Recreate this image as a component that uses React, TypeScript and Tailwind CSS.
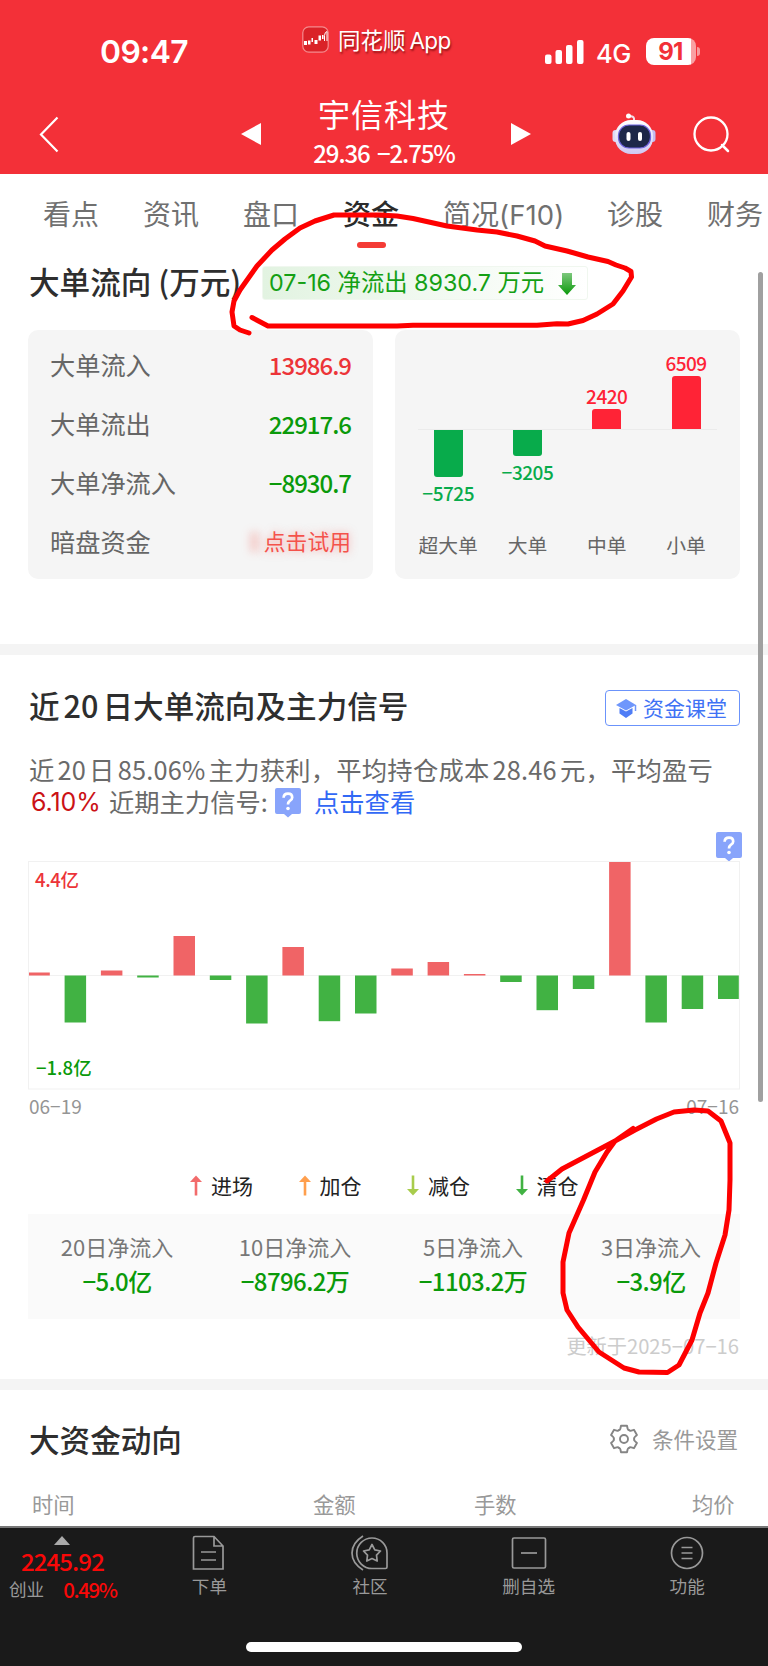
import React from "react";

const CJK = "font-['Noto_Sans_CJK_SC',sans-serif]";
const SF = "font-['Inter','Noto_Sans_CJK_SC',sans-serif]";

const TABS = [
  { label: "看点", cls: "w-[100px]" },
  { label: "资讯", cls: "w-[100px]" },
  { label: "盘口", cls: "w-[100px]" },
  { label: "资金", cls: "w-[100px]", active: true },
  { label: "简况(F10)", cls: "w-[164px]" },
  { label: "诊股", cls: "w-[100px]" },
  { label: "财务", cls: "w-[60px]" },
];

const FLOW = [
  { label: "大单流入", value: "13986.9", cls: "text-[#ec3438]" },
  { label: "大单流出", value: "22917.6", cls: "text-[#0a9a0a]" },
  { label: "大单净流入", value: "−8930.7", cls: "text-[#0a9a0a]" },
];

const ORDERS = [
  { label: "超大单", value: -5725, px: 47, line: "w-[70px] self-end" },
  { label: "大单", value: -3205, px: 26, line: "w-full" },
  { label: "中单", value: 2420, px: 20, line: "w-full" },
  { label: "小单", value: 6509, px: 53, line: "w-[71px] self-start" },
];

const DAYS = [3, -47, 5, -2, 39.5, -4.5, -48, 28.5, -45.7, -38, 7, 13.5, 1.5, -6.5, -34.7, -13.5, 113.5, -47, -33.5, -23.5];

const LEGEND = [
  { label: "进场", color: "#f26b6b", up: true },
  { label: "加仓", color: "#ff9f4d", up: true },
  { label: "减仓", color: "#a8cc4c", up: false },
  { label: "清仓", color: "#41b243", up: false },
];

const STATS = [
  ["20日净流入", "−5.0亿"],
  ["10日净流入", "−8796.2万"],
  ["5日净流入", "−1103.2万"],
  ["3日净流入", "−3.9亿"],
];

function Robot() {
  return (
    <svg width="46" height="44" viewBox="0 0 46 44">
      <defs>
        <linearGradient id="shell" x1="0" y1="0" x2="0" y2="1">
          <stop offset="0" stopColor="#ffffff" />
          <stop offset="1" stopColor="#cfc8f2" />
        </linearGradient>
      </defs>
      <path d="M23 9V6.500Q22.500 4 18 4" fill="none" stroke="#f3dfe9" strokeWidth="2" />
      <circle cx="17.500" cy="4" r="2.500" fill="#fff" />
      <rect x="1.500" y="18" width="6" height="12" rx="3" fill="#dedaf6" />
      <rect x="38.500" y="18" width="6" height="12" rx="3" fill="#c4bcf0" />
      <rect x="4" y="8" width="38" height="34" rx="16" fill="url(#shell)" />
      <rect x="7.500" y="13" width="32" height="23" rx="10.500" fill="#1d2748" stroke="#6d62dd" strokeWidth="1.200" />
      <rect x="15.500" y="20" width="4" height="9" rx="2" fill="#fff" />
      <rect x="27" y="20" width="4" height="9" rx="2" fill="#fff" />
    </svg>
  );
}

function Question() {
  return (
    <svg width="26" height="30" viewBox="0 0 26 30" className="shrink-0">
      <path d="M2 0H24Q26 0 26 2V24Q26 26 24 26H17L13 29.500L9 26H2Q0 26 0 24V2Q0 0 2 0Z" fill="#88a4fb" />
      <path d="M8.600 9.800Q8.800 5.700 13 5.700T17.200 9.500Q17.200 11.400 14.800 12.900Q13 14.200 13 16.500" fill="none" stroke="#fff" strokeWidth="2.700" />
      <circle cx="13" cy="20.500" r="1.800" fill="#fff" />
    </svg>
  );
}

function Gear() {
  return (
    <svg width="30" height="30" viewBox="-15 -15 30 30" className="mr-[13px]" fill="none" stroke="#858585" strokeWidth="1.900" strokeLinejoin="round" strokeLinecap="round">
      {[0, 60, 120, 180, 240, 300].map((a) => (
        <path key={a} transform={`rotate(${a})`} d="M-5.100 -8.830Q-3.900 -9 -3.600 -10.500L-3 -13.200H3L3.600 -10.500Q3.900 -9 5.100 -8.830" />
      ))}
      <circle cx="0" cy="0" r="4" />
    </svg>
  );
}

function StatusBar() {
  return (
    <div className="flex h-[88px] items-start text-white">
      <div className={`${SF} w-[302px] pt-[32px] pl-[100px] text-[31.8px] leading-[40px] font-semibold tracking-[-0.6px]`}>09:47</div>
      <svg width="27" height="27" viewBox="0 0 27 27" className="mt-[26px]">
        <rect x="0.800" y="0.800" width="25.400" height="25.400" rx="6" fill="#da2228" stroke="#f58b8e" strokeWidth="1.200" />
        <path d="M2 15h3v4H2zM6 14.500h2.500v4H6zM9.500 12h1.500v4H9.500zM12.500 14h3v4h-3zM16.500 9.500h2.500v5h-2.500zM20 9h1.500v4H20z" fill="#fff" />
        <path d="M22.500 15V9.500Q22.800 6 25 5.500V15" fill="none" stroke="#fff" strokeWidth="1" />
      </svg>
      <div className={`${SF} ml-[9px] w-[207px] pt-[25px] text-[22.5px] leading-[32px] whitespace-nowrap [text-shadow:1px_2px_2px_rgba(90,0,0,0.6)]`}>
        同花顺<span className="ml-[4px] tracking-[-0.7px]">App</span>
      </div>
      <svg width="39" height="25" viewBox="0 0 39 25" className="mt-[40px]" fill="#fff">
        <rect x="0" y="14.500" width="6.500" height="9.500" rx="2" />
        <rect x="10.500" y="10" width="6.500" height="14" rx="2" />
        <rect x="21" y="5" width="6.500" height="19" rx="2" />
        <rect x="32" y="0" width="6.500" height="24" rx="2" />
      </svg>
      <div className={`${SF} ml-[12px] w-[49.5px] pt-[38px] text-[25.5px] leading-[31px] font-medium tracking-[-0.5px]`}>4G</div>
      <div className="mt-[38px] flex h-[27px] w-[50px] items-center justify-center rounded-[8px] bg-gradient-to-r from-white from-90% to-[#f9a0a3] to-90%">
        <span className={`${SF} text-[24px] leading-[27px] font-bold tracking-[-0.8px] text-[#f23037]`}>91</span>
      </div>
      <div className="mt-[47px] ml-[1.5px] h-[9px] w-[3px] rounded-r-full bg-[#f79a9d]" />
    </div>
  );
}

function TitleBar() {
  return (
    <div className="flex h-[86px] items-start text-white">
      <svg width="20" height="37" viewBox="0 0 20 37" className="mt-[28px] ml-[39px]">
        <path d="M18.500 1.500L2 18.500L18.500 35.500" fill="none" stroke="#fff" strokeWidth="2.200" />
      </svg>
      <svg width="20" height="22" viewBox="0 0 20 22" className="mt-[35px] ml-[182px]">
        <path d="M20 0V22L0 11Z" fill="#fff" />
      </svg>
      <div className={`${CJK} flex w-[250px] flex-col items-center pr-[4px]`}>
        <div className="mt-[5px] text-[32px] leading-[40px] tracking-[1px]">宇信科技</div>
        <div className="mt-[6px] text-[24px] leading-[28px] font-medium tracking-[-1.1px] [word-spacing:3px] whitespace-nowrap">29.36 −2.75%</div>
      </div>
      <svg width="20" height="22" viewBox="0 0 20 22" className="mt-[35px]">
        <path d="M0 0V22L20 11Z" fill="#fff" />
      </svg>
      <div className="mt-[24px] ml-[80px]">
        <Robot />
      </div>
      <svg width="38" height="38" viewBox="0 0 38 38" className="mt-[28px] ml-[35.5px]">
        <circle cx="18" cy="18" r="16.500" fill="none" stroke="#fff" strokeWidth="2.300" />
        <path d="M29 29L35 35" stroke="#fff" strokeWidth="2.500" strokeLinecap="round" />
      </svg>
    </div>
  );
}

function Tabs() {
  return (
    <div className={`${CJK} flex h-[80px] overflow-hidden pl-[43px] text-[28px] leading-[40px] text-[#707070]`}>
      {TABS.map((t) => (
        <div key={t.label} className={`${t.cls} shrink-0 pt-[19px] whitespace-nowrap`}>
          {t.active ? (
            <div className="flex w-[56px] flex-col items-center font-medium text-[#2b2b2b]">
              {t.label}
              <div className="mt-[9px] h-[6px] w-[29px] rounded-full bg-[#f43b35]" />
            </div>
          ) : t.label.startsWith("简况") ? (
            <span>简况<span className="font-['Inter'] text-[27.5px] tracking-[0.1px]">(F10)</span></span>
          ) : (
            t.label
          )}
        </div>
      ))}
    </div>
  );
}

function Overview() {
  return (
    <section className="h-[390px] px-[28px]">
      <div className="flex h-[76px] items-start">
        <h2 className={`${CJK} w-[234px] pt-[7px] pl-px text-[30.6px] leading-[40px] font-medium whitespace-nowrap text-[#2e2e2e]`}>
          大单流向 <span>(万元)</span>
        </h2>
        <div className={`${SF} mt-[12px] flex h-[34px] w-[326px] items-center rounded-[3px] border border-[#f0f7ef] bg-gradient-to-r from-[#e2f3e1] to-white pt-px pl-[6px] text-[23.3px] whitespace-nowrap text-[#14a014]`}>
          07-16 净流出 8930.7 万元
          <svg width="18" height="22" viewBox="0 0 18 22" className="ml-[14px]">
            <defs>
              <linearGradient id="down" x1="0" y1="0" x2="0" y2="1">
                <stop offset="0" stopColor="#7cc77c" />
                <stop offset="1" stopColor="#0a9a0a" />
              </linearGradient>
            </defs>
            <path d="M4 0H14V12H18L9 22L0 12H4Z" fill="url(#down)" />
          </svg>
        </div>
      </div>
      <div className="flex gap-[22px]">
        <div className={`${CJK} flex h-[249px] w-[345px] flex-col rounded-[10px] bg-[#f5f5f5] pt-[5px] pr-[22px] pl-[22px] text-[25.2px] text-[#666]`}>
          {FLOW.map((r) => (
            <div key={r.label} className="flex h-[59px] items-center justify-between">
              <span>{r.label}</span>
              <span className={`${r.cls} text-[24px] font-medium tracking-[-1px]`}>{r.value}</span>
            </div>
          ))}
          <div className="flex h-[59px] items-center justify-between">
            <span>暗盘资金</span>
            <div className="flex items-center">
              <div className="h-[20px] w-[9px] bg-[#f4524b]/25 blur-[4px]" />
              <span className="ml-[5px] text-[21.8px] text-[#f4524b] [text-shadow:0_0_9px_rgba(244,82,75,0.5)]">点击试用</span>
            </div>
          </div>
        </div>
        <div className={`${CJK} h-[249px] w-[345px] rounded-[10px] bg-[#f5f5f5] pt-[20px] pl-[13.5px]`}>
          <div className="flex">
            {ORDERS.map((o) => (
              <div key={o.label} className="flex w-[79.3px] flex-col items-center">
                <div className="flex h-[79px] flex-col items-center justify-end">
                  {o.value > 0 && (
                    <>
                      <span className="mb-[3px] text-[19px] leading-[21px] font-medium tracking-[-0.5px] text-[#ff2336]">{o.value}</span>
                      <div className="w-[29px] rounded-t-[3px] bg-[#ff2336]" style={{ height: o.px }} />
                    </>
                  )}
                </div>
                <div className={`${o.line} h-px bg-[#ebebeb]`} />
                <div className="flex h-[101px] flex-col items-center">
                  {o.value < 0 && (
                    <>
                      <div className="w-[29px] rounded-b-[3px] bg-[#08ab4b]" style={{ height: o.px }} />
                      <span className="mt-[4.5px] text-[19px] leading-[21px] font-medium tracking-[-0.5px] text-[#08ab4b]">−{Math.abs(o.value)}</span>
                    </>
                  )}
                </div>
                <span className="text-[19.8px] leading-[28px] text-[#666]">{o.label}</span>
              </div>
            ))}
          </div>
        </div>
      </div>
    </section>
  );
}

function DayChart() {
  const base = 114;
  return (
    <div className="h-[229px]">
      <svg width="712" height="229" viewBox="0 0 712 229">
        <rect x="0.500" y="0.500" width="711" height="227.500" fill="none" stroke="#f1f1f1" />
        <path d={`M0 ${base + 0.5}H712`} stroke="#f1f1f1" />
        {DAYS.map((v, i) => (
          <rect key={i} x={i === 0 ? 1 : i * 36.3 + 0.3} y={v > 0 ? base + 0.5 - v : base + 0.5} width={i === 0 || i === 19 ? 20.8 : 21.5} height={Math.abs(v)} fill={v > 0 ? "#f06466" : "#41b243"} />
        ))}
        <text x="7" y="26" fontSize="18.500" fontWeight="500" letterSpacing="-0.4" fill="#ec3438" fontFamily="'Noto Sans CJK SC', sans-serif">4.4亿</text>
        <text x="8" y="214" fontSize="18.500" fontWeight="500" letterSpacing="0" fill="#0a9a0a" fontFamily="'Noto Sans CJK SC', sans-serif">−1.8亿</text>
      </svg>
    </div>
  );
}

function Signals() {
  return (
    <section className="h-[724px] px-[28px]">
      <div className="flex items-start justify-between pt-[34px]">
        <h2 className={`${CJK} -mt-[3px] pl-px text-[30.6px] leading-[39px] font-medium whitespace-nowrap text-[#2e2e2e]`}>
          近<span className="mx-[4px]">20</span>日大单流向及主力信号
        </h2>
        <div className={`${CJK} mt-[1px] flex h-[36px] w-[135px] items-center rounded-[4px] border-[1.5px] border-[#6b93fb] pl-[10px] text-[21px] text-[#3f72f5]`}>
          <svg width="21" height="19" viewBox="0 0 21 19" className="mr-[6px] shrink-0">
            <path d="M10 0L20 6L10 11.500L0 6Z" fill="#6f96fb" />
            <path d="M3.500 9L10 12.500L16.500 9V14.500L10 19L3.500 14.500Z" fill="#4f7df6" />
            <path d="M19.500 6V12" stroke="#6f96fb" strokeWidth="1.500" />
          </svg>
          <span className="-mt-px">资金课堂</span>
        </div>
      </div>
      <div className={`${CJK} mt-[27px] text-[25.3px] leading-[32px] whitespace-nowrap text-[#6a6a6a]`}>
        <div className="pl-px tracking-[0.24px]">
          近<span className="mx-[3px]">20</span>日<span className="mx-[3px]">85.06%</span>主力获利，平均持仓成本<span className="mx-[3px]">28.46</span>元，平均盈亏
        </div>
        <div className="flex h-[32px] items-start">
          <span className={`${SF} ml-[3px] w-[78px] pt-px text-[25px] tracking-[-0.1px] text-[#cb1216]`}>6.10%</span>
          <span className="w-[166px]">近期主力信号:</span>
          <div className="pt-[3px]">
            <Question />
          </div>
          <span className="ml-[13px] text-[#3168f5]">点击查看</span>
        </div>
      </div>
      <div className="-mr-[2px] mt-[15px] flex h-[30px] justify-end">
        <Question />
      </div>
      <div className="-mt-px">
        <DayChart />
      </div>
      <div className={`${CJK} mt-[5px] flex justify-between pr-px pl-px text-[19px] leading-[22px] text-[#959595]`}>
        <span>06−19</span>
        <span>07−16</span>
      </div>
      <div className={`${CJK} mt-[53px] flex pl-[162px] text-[21px] leading-[30px] text-[#222]`}>
        {LEGEND.map((l) => (
          <div key={l.label} className="flex w-[108.5px] items-center">
            <svg width="12" height="21" viewBox="0 0 12 21" className="mr-[9px] shrink-0">
              <g transform={l.up ? undefined : "rotate(180 6 10.500)"} fill={l.color}>
                <path d="M6 0.500L12 7H0Z" />
                <rect x="4.700" y="5" width="2.600" height="15.500" />
              </g>
            </svg>
            {l.label}
          </div>
        ))}
      </div>
      <div className={`${CJK} mt-[14px] grid h-[105px] grid-cols-4 bg-[#fafafa] pt-[16px] text-center`}>
        {STATS.map(([k, v]) => (
          <div key={k}>
            <div className="text-[22px] leading-[32px] text-[#777]">{k}</div>
            <div className="mt-[3px] text-[24px] leading-[32px] font-medium tracking-[-0.6px] text-[#0a9a0a]">{v}</div>
          </div>
        ))}
      </div>
      <div className={`${CJK} mt-[12px] pr-px text-right text-[20.2px] leading-[30px] text-[#ccc]`}>更新于2025−07−16</div>
    </section>
  );
}

function Moves() {
  return (
    <section className={`${CJK} h-[136px] px-[28px]`}>
      <div className="flex items-center justify-between pt-[29px]">
        <h2 className="pl-px text-[30.6px] leading-[40px] font-medium text-[#2e2e2e]">大资金动向</h2>
        <div className="flex items-center pr-[2px] text-[21.5px] leading-[40px] text-[#999]">
          <Gear />
          条件设置
        </div>
      </div>
      <div className="mt-[21px] flex text-[21.3px] leading-[48px] text-[#999]">
        <span className="w-[281px] pl-[4px]">时间</span>
        <span className="w-[161px] pl-[4px]">金额</span>
        <span className="w-[218px] pl-[4px]">手数</span>
        <span className="pl-[4px]">均价</span>
      </div>
    </section>
  );
}

function Footer() {
  const item = "flex flex-col items-center";
  const label = "mt-[2px] text-[17.6px] leading-[26px] text-[#999]";
  return (
    <footer className={`${CJK} flex h-[140px] flex-col items-center border-t-2 border-[#777] bg-[#1a1a1a]`}>
      <div className="flex h-[114px] w-full items-start">
        <div className="flex w-[130px] flex-col pt-[8px]">
          <svg width="16" height="9" viewBox="0 0 16 9" className="ml-[54px]">
            <path d="M8 0L16 9H0Z" fill="#aaa" />
          </svg>
          <div className="mt-[2px] pl-[21px] text-[24px] leading-[28px] font-medium tracking-[-0.9px] text-[#f90808]">2245.92</div>
          <div className="flex items-center pl-[9px] text-[17.6px] leading-[28px] text-[#999]">
            创业<span className="ml-[19px] text-[20.5px] font-medium tracking-[-1.4px] text-[#f90808]">0.49%</span>
          </div>
        </div>
        <div className={`${item} w-[160px] pt-[7px]`}>
          <svg width="34" height="36" viewBox="0 0 34 36" fill="none" stroke="#999" strokeWidth="1.700">
            <path d="M3 1.500H22L31 11V34H1.500V3Q1.500 1.500 3 1.500ZM22 1.500V11H31M9 17H24M9 25H24" />
          </svg>
          <span className={label}>下单</span>
        </div>
        <div className={`${item} w-[162px] pt-[7px]`}>
          <svg width="38" height="36" viewBox="0 0 38 36" fill="none" stroke="#999" strokeWidth="1.700" strokeLinejoin="round">
            <path d="M21 3A15 15 0 1 0 21 33.500H34.500Q36 33.500 36 32V18A15 15 0 0 0 21 3Z" />
            <path d="M12 1Q1 8 1 18T12 35" />
            <path d="M21 9.500L23.800 14.900L29.500 16L25.500 20.200L26.200 26L21 23.500L15.800 26L16.500 20.200L12.500 16L18.200 14.900Z" />
          </svg>
          <span className={label}>社区</span>
        </div>
        <div className={`${item} w-[156px] pt-[7px]`}>
          <svg width="36" height="36" viewBox="0 0 36 36" fill="none" stroke="#999" strokeWidth="1.700">
            <rect x="1.500" y="3" width="33" height="30" rx="1.500" />
            <path d="M10 18H26" />
          </svg>
          <span className={label}>删自选</span>
        </div>
        <div className={`${item} w-[162px] pt-[7px]`}>
          <svg width="34" height="36" viewBox="0 0 34 36" fill="none" stroke="#999" strokeWidth="1.700">
            <circle cx="17" cy="18" r="15.500" />
            <path d="M11.500 12.500H22.500M11.500 18H22.500M11.500 23.500H22.500" />
          </svg>
          <span className={label}>功能</span>
        </div>
      </div>
      <div className="h-[10px] w-[276px] rounded-full bg-white" />
    </footer>
  );
}

function Markup() {
  return (
    <svg className="pointer-events-none absolute top-0 left-0" width="768" height="1666" viewBox="0 0 768 1666" fill="none" stroke="#fe0000" strokeWidth="5" strokeLinecap="round" strokeLinejoin="round">
      <path d="M249 333L240 330L234 326L232 312L234 301L240 290L257 266L272 250L285 239L300 228L315 221L334 215H380L397 216L413 218.500L447 226L477 230L497 232L517 236L535 241L545 246L567 251L588 257L608 261.500L616 265L625 268L631 271.500L631.500 277L623 291L613 304L597 314L583 320.500L568 324L557 323.700L537 325.300H413L397 326H268L252 317.500" />
      <path d="M547 1181L562 1169L615 1141L635 1130L656.500 1119L674 1112L694 1110L708 1111L721 1121L730 1143V1180L729 1210L725 1235L716 1263L708 1293L700 1313L692 1340L679 1365L667.500 1372.500L639 1372L624 1368L599 1352L578 1327L567 1310L563 1293V1262L569 1233L583.500 1200L595 1172L607 1152L615 1141L633 1128.500" />
    </svg>
  );
}

export default function App() {
  return (
    <div className="relative h-[1666px] w-[768px] overflow-hidden bg-white">
      <header className="h-[174px] bg-[#f33038]">
        <StatusBar />
        <TitleBar />
      </header>
      <Tabs />
      <Overview />
      <div className="h-[11px] bg-[#f4f4f4]" />
      <Signals />
      <div className="h-[11px] bg-[#f4f4f4]" />
      <Moves />
      <Footer />
      <div className="absolute top-[272px] left-[758px] h-[830px] w-[5px] rounded-full bg-[#a0a0a0]" />
      <Markup />
    </div>
  );
}
